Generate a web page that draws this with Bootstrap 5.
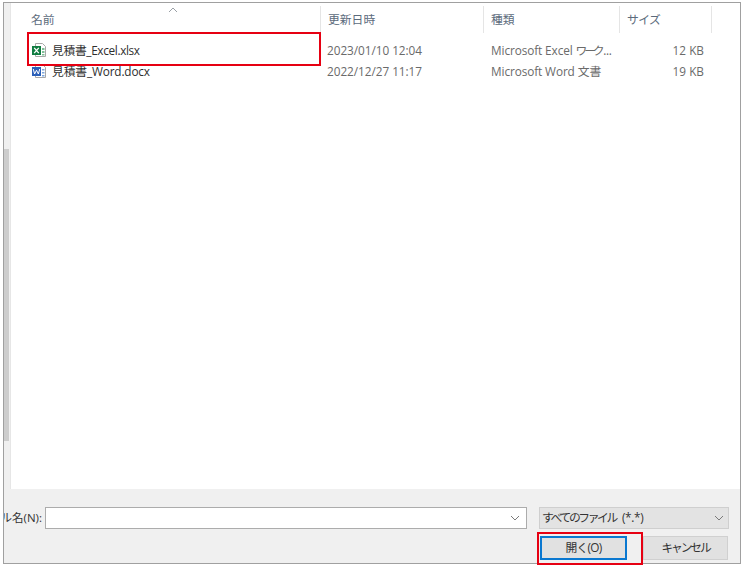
<!doctype html>
<html lang="ja">
<head>
<meta charset="utf-8">
<title>ファイルを開く</title>
<link rel="stylesheet" href="https://cdn.jsdelivr.net/npm/bootstrap@5.3.0/dist/css/bootstrap.min.css">
<style>
html,body{height:100%;background:#fff;}
body{margin:0;font-family:"Open Sans","Noto Sans CJK JP",sans-serif;font-size:11.8px;color:#333;overflow:hidden;position:relative;}
.stage{padding:2px 7px 5px 3px;height:569px;}
.dlg{height:100%;border:1px solid #a0a0a0;background:#f0f0f0;overflow:hidden;}
.topzone{height:486px;}
.rail{width:5px;background:#f0f0f0;padding-top:146px;}
.thumb{height:292px;background:#cdcdcd;}
.listpane{background:#fff;border-left:1px solid #e6e6e6;min-width:0;margin-left:1px;}
.headrow{height:30px;padding-top:3px;color:#5c6b7c;position:relative;}
.hc{height:100%;display:flex;align-items:center;border-right:1px solid #e5e5e5;padding-left:7px;white-space:nowrap;}
.c1{width:310px;padding-left:20px;}
.c2{width:163px;}
.c3{width:136px;}
.c4{width:92px;}
.c4 span{letter-spacing:-.6px;}
.sortmark{position:absolute;left:157px;top:4px;}
.frow{height:21px;display:flex;align-items:center;white-space:nowrap;}
.fn{width:311px;padding-left:21px;color:#2e2e2e;display:flex;align-items:center;gap:6px;}
.fn span{letter-spacing:-.35px;}
.fn span.wd{letter-spacing:-.15px;}
.fd{width:163px;padding-left:5px;color:#6a6a6a;letter-spacing:-.05px;}
.ft{width:136px;padding-left:6px;color:#6a6a6a;letter-spacing:-.1px;}
.ft .tight{letter-spacing:-3.2px;}
.ft .dots{margin-left:2px;letter-spacing:-.4px;}
.fs{width:83px;text-align:right;color:#6a6a6a;}
.firstrow{margin-top:7px;}
.botzone{height:74px;padding-top:18px;}
.lbl{width:38px;overflow:hidden;white-space:nowrap;direction:rtl;color:#333;font-size:11.5px;text-align:right;margin-right:3px;}
.fname{width:482px;height:22px;border:1px solid #acacac;background:#fff;display:flex;align-items:center;justify-content:flex-end;padding-right:6px;}
.ftype{width:190px;height:22px;margin-left:12px;border:1px solid #cfcfcf;background:#e3e3e3;display:flex;align-items:center;justify-content:space-between;padding:0 4px 0 2px;color:#333;white-space:nowrap;}
.ftype .kana{letter-spacing:-2.4px;}
.ftype .glob{letter-spacing:-.3px;margin-left:6px;}
.btnrow{margin-top:7px;padding-left:536px;gap:16px;}
.winbtn{width:87px;height:24px;background:#e1e1e1;color:#333;border:1px solid #adadad;border-radius:0;padding:0;font-size:11.8px;line-height:1;}
.winbtn.def{border:2px solid #0a78d0;letter-spacing:-.7px;}
.winbtn.alt{width:85px;border-color:#d0d0d0;letter-spacing:-2.2px;}
.redbox{position:absolute;border:2px solid #e60012;pointer-events:none;}
.rb1{left:27px;top:32px;width:294px;height:34px;}
.rb2{left:537px;top:532px;width:106px;height:33px;}
</style>
</head>
<body>
<div class="stage">
  <div class="dlg">
    <div class="topzone d-flex">
      <div class="rail"><div class="thumb"></div></div>
      <div class="listpane flex-grow-1">
        <div class="headrow d-flex">
          <div class="hc c1">名前</div>
          <div class="hc c2">更新日時</div>
          <div class="hc c3">種類</div>
          <div class="hc c4"><span>サイズ</span></div>
          <svg class="sortmark" width="10" height="6" viewBox="0 0 10 6"><path d="M1 5 5 1l4 4" fill="none" stroke="#9aa0a6"/></svg>
        </div>
        <div class="frow firstrow">
          <div class="fn">
            <svg width="14" height="15" viewBox="0 0 14 15"><path d="M3.500.5h7l3 3v10h-10z" fill="#fff" stroke="#a8a8a8"/><path d="M10 5h2.500v2H10zM10 8h2.500v2H10zM10 11h2.500v1.500H10z" fill="#7fbf97"/><rect x="0" y="3" width="9" height="9" fill="#107c41"/><path d="M2.200 4.800 6.800 10.200M6.800 4.800 2.200 10.200" stroke="#fff" stroke-width="1.300"/></svg>
            <span>見積書_Excel.xlsx</span>
          </div>
          <div class="fd">2023/01/10 12:04</div>
          <div class="ft">Microsoft Excel <span class="tight">ワーク</span><span class="dots">...</span></div>
          <div class="fs">12 KB</div>
        </div>
        <div class="frow">
          <div class="fn">
            <svg width="14" height="15" viewBox="0 0 14 15"><path d="M3.500.5h7l3 3v10h-10z" fill="#fff" stroke="#a8a8a8"/><path d="M10 5h2.500v1.500H10zM10 8h2.500v1.500H10zM10 11h2.500v1.500H10z" fill="#7ea6dc"/><rect x="0" y="3" width="9" height="9" fill="#2b5fb8"/><path d="M1.300 5l1.300 5 1.900-3.800L6.400 10l1.300-5" fill="none" stroke="#fff" stroke-width="1"/></svg>
            <span class="wd">見積書_Word.docx</span>
          </div>
          <div class="fd">2022/12/27 11:17</div>
          <div class="ft">Microsoft Word 文書</div>
          <div class="fs">19 KB</div>
        </div>
      </div>
    </div>
    <div class="botzone">
      <div class="d-flex align-items-center">
        <div class="lbl"><bdi>ファイル名(N):</bdi></div>
        <div class="fname"><svg width="10" height="6" viewBox="0 0 10 6"><path d="M1 1l4 4 4-4" fill="none" stroke="#7a7a7a"/></svg></div>
        <div class="ftype"><div><span class="kana">すべてのファイル</span><span class="glob">(*.*)</span></div><svg width="10" height="6" viewBox="0 0 10 6"><path d="M1 1l4 4 4-4" fill="none" stroke="#7a7a7a"/></svg></div>
      </div>
      <div class="btnrow d-flex">
        <button type="button" class="btn winbtn def">開く(O)</button>
        <button type="button" class="btn winbtn alt">キャンセル</button>
      </div>
    </div>
  </div>
</div>
<div class="redbox rb1"></div>
<div class="redbox rb2"></div>
</body>
</html>
